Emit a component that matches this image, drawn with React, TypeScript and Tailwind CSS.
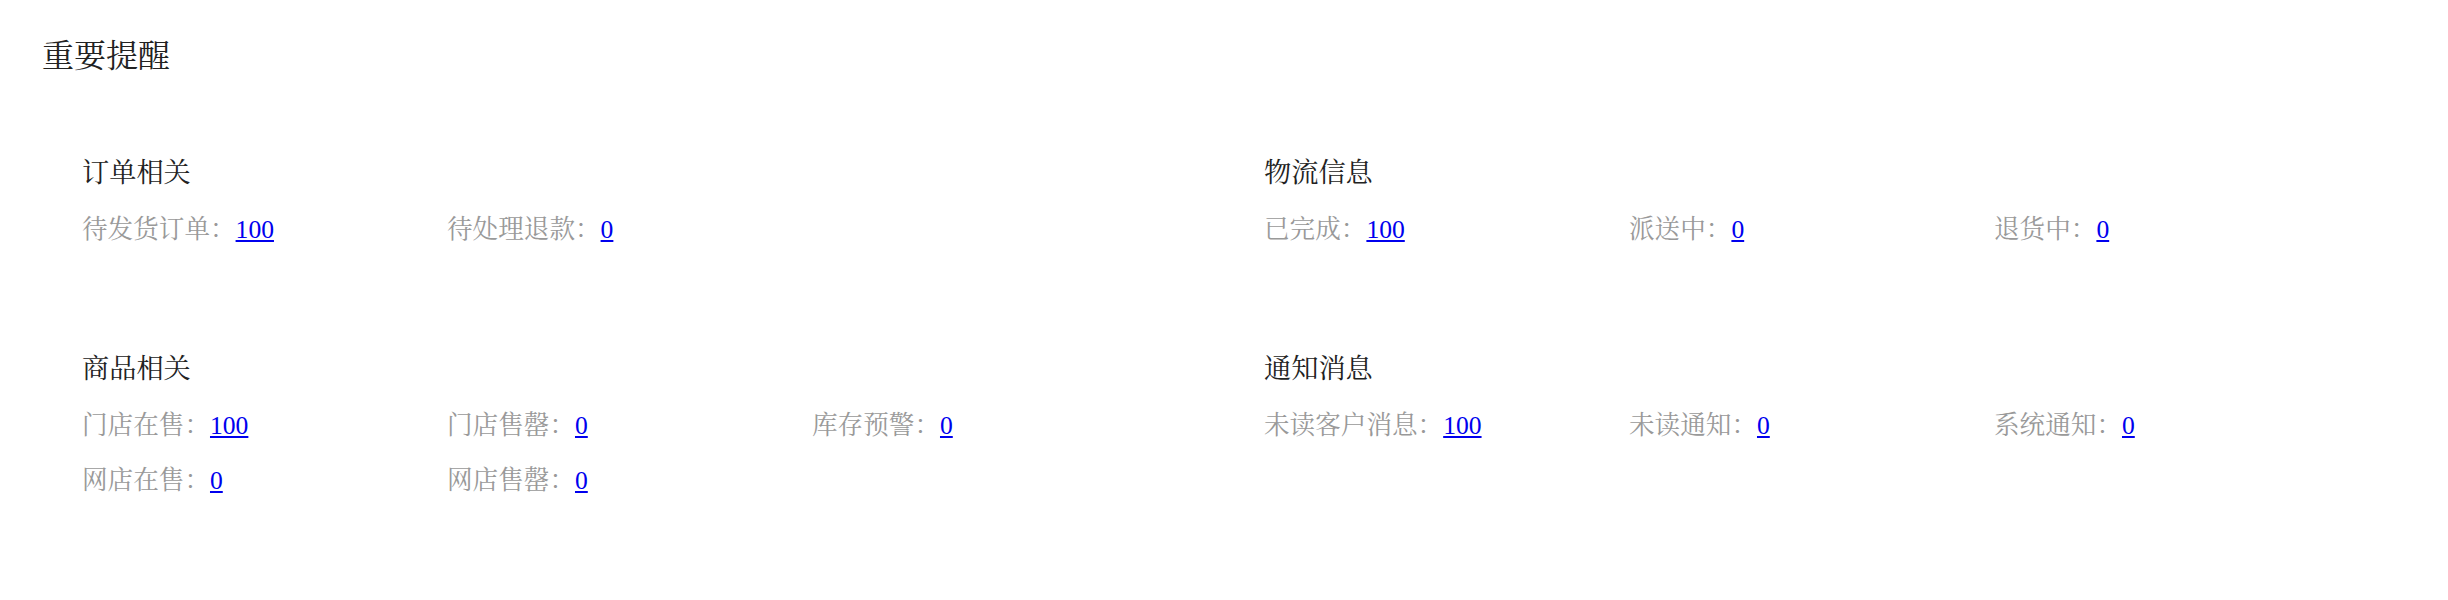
import React from "react";

type Item = { label: string; value: string };
type Section = { title: string; items: Item[] };

const sections: Section[] = [
  {
    title: "订单相关",
    items: [
      { label: "待发货订单：", value: "100" },
      { label: "待处理退款：", value: "0" },
    ],
  },
  {
    title: "物流信息",
    items: [
      { label: "已完成：", value: "100" },
      { label: "派送中：", value: "0" },
      { label: "退货中：", value: "0" },
    ],
  },
  {
    title: "商品相关",
    items: [
      { label: "门店在售：", value: "100" },
      { label: "门店售罄：", value: "0" },
      { label: "库存预警：", value: "0" },
      { label: "网店在售：", value: "0" },
      { label: "网店售罄：", value: "0" },
    ],
  },
  {
    title: "通知消息",
    items: [
      { label: "未读客户消息：", value: "100" },
      { label: "未读通知：", value: "0" },
      { label: "系统通知：", value: "0" },
    ],
  },
];

function SectionBlock({ s }: { s: Section }) {
  return (
    <div className="px-[40px]">
      <div className="h-[40px] leading-[40px] text-[27.2px] text-[#222222]">{s.title}</div>
      <div className="mt-[10px] flex flex-wrap">
        {s.items.map((it, i) => (
          <div key={i} className="w-[365px] h-[55px] flex items-center text-[25.6px] whitespace-nowrap">
            <span className="text-[#999999]">{it.label}</span>
            <a href="#" className="text-[#0000ee] underline">
              {it.value}
            </a>
          </div>
        ))}
      </div>
    </div>
  );
}

export default function App() {
  return (
    <div className="w-[2448px] h-[600px] bg-white font-['Liberation_Serif','Noto_Serif_CJK_SC','Noto_Sans_CJK_SC',serif] px-[42px]">
      <div className="pt-[32px] leading-[48px] text-[32px] text-[#222222]">重要提醒</div>
      <div className="mt-[73px] grid grid-cols-2 gap-y-[91px]">
        {sections.map((s, i) => (
          <SectionBlock key={i} s={s} />
        ))}
      </div>
    </div>
  );
}
